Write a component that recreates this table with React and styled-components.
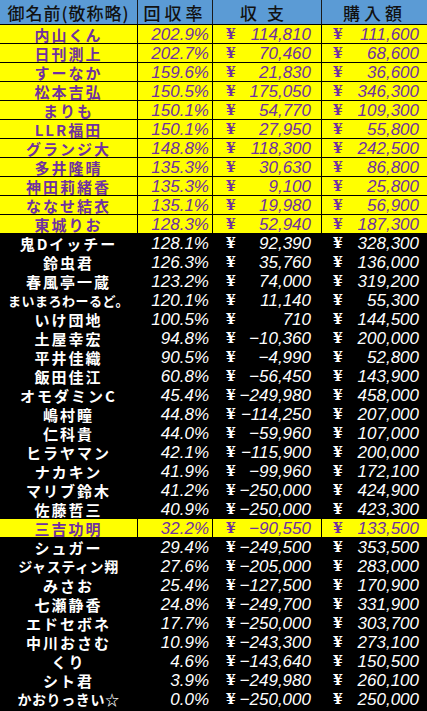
import React from "react";
import styled, { createGlobalStyle } from "styled-components";

const Global = createGlobalStyle`
  html, body { margin: 0; padding: 0; background: #000; }
  body { width: 427px; height: 711px; overflow: hidden; }
`;

const COLS = "138px 75px 109px 105px";

const Sheet = styled.div`
  width: 427px;
  height: 711px;
  background: #000;
  display: flex;
  flex-direction: column;
`;

const HeaderRow = styled.div`
  display: grid;
  grid-template-columns: ${COLS};
  height: 25px;
  box-sizing: border-box;
  background: #5b9bd5;
  border-bottom: 1px solid #000;
`;

const HeadCell = styled.div`
  display: flex;
  align-items: center;
  justify-content: center;
  box-sizing: border-box;
  border-right: 1px solid #1a1a1a;
  font-family: "Noto Sans CJK JP", sans-serif;
  font-weight: 500;
  font-size: 17px;
  line-height: 1;
  letter-spacing: ${(p) => p.$ls}px;
  color: #111;
  &:last-child { border-right: none; }
`;

const Row = styled.div`
  display: grid;
  grid-template-columns: ${COLS};
  height: 19px;
  box-sizing: border-box;
  background: ${(p) => (p.$hl ? "#ffff00" : "#000")};
  color: ${(p) => (p.$hl ? "#7030a0" : "#fff")};
  border-bottom: 1px solid #000;
`;

const Cell = styled.div`
  display: flex;
  align-items: center;
  box-sizing: border-box;
  border-right: 1px solid #000;
  overflow: hidden;
  white-space: nowrap;
  line-height: 1;
  &:last-child { border-right: none; }
`;

const NameCell = styled(Cell)`
  justify-content: center;
  font-family: "Noto Sans CJK JP", sans-serif;
  font-weight: 700;
  font-size: ${(p) => (p.$fit === 2 ? 13 : p.$fit === 1 ? 14 : 15)}px;
  letter-spacing: ${(p) => (p.$fit === 2 ? 0.5 : p.$fit === 1 ? 0.6 : 2)}px;
`;

const RateCell = styled(Cell)`
  justify-content: flex-end;
  padding-right: 3px;
  font-family: "Liberation Sans", Arial, sans-serif;
  font-style: italic;
  font-size: 17px;
`;

const MoneyCell = styled(Cell)`
  justify-content: space-between;
  padding-left: ${(p) => p.$pl}px;
  padding-right: ${(p) => p.$pr}px;
  font-family: "Liberation Sans", Arial, sans-serif;
  font-style: italic;
  font-size: 17px;
`;

const Yen = styled.span`
  font-family: "DejaVu Serif", "Liberation Serif", serif;
  font-style: normal;
  font-weight: 700;
  font-size: 14px;
`;

const rows = [
  ["内山くん", "202.9%", "114,810", "111,600", true],
  ["日刊測上", "202.7%", "70,460", "68,600", true],
  ["すーなか", "159.6%", "21,830", "36,600", true],
  ["松本吉弘", "150.5%", "175,050", "346,300", true],
  ["まりも", "150.1%", "54,770", "109,300", true],
  ["LLR福田", "150.1%", "27,950", "55,800", true],
  ["グランジ大", "148.8%", "118,300", "242,500", true],
  ["多井隆晴", "135.3%", "30,630", "86,800", true],
  ["神田莉緒香", "135.3%", "9,100", "25,800", true],
  ["ななせ結衣", "135.1%", "19,980", "56,900", true],
  ["東城りお", "128.3%", "52,940", "187,300", true],
  ["鬼Dイッチー", "128.1%", "92,390", "328,300"],
  ["鈴虫君", "126.3%", "35,760", "136,000"],
  ["春風亭一蔵", "123.2%", "74,000", "319,200"],
  ["まいまろわーるど。", "120.1%", "11,140", "55,300", false, 2],
  ["いけ団地", "100.5%", "710", "144,500"],
  ["土屋幸宏", "94.8%", "−10,360", "200,000"],
  ["平井佳織", "90.5%", "−4,990", "52,800"],
  ["飯田佳江", "60.8%", "−56,450", "143,900"],
  ["オモダミンC", "45.4%", "−249,980", "458,000"],
  ["嶋村瞳", "44.8%", "−114,250", "207,000"],
  ["仁科貴", "44.0%", "−59,960", "107,000"],
  ["ヒラヤマン", "42.1%", "−115,900", "200,000"],
  ["ナカキン", "41.9%", "−99,960", "172,100"],
  ["マリブ鈴木", "41.2%", "−250,000", "424,900"],
  ["佐藤哲三", "40.9%", "−250,000", "423,300"],
  ["三吉功明", "32.2%", "−90,550", "133,500", true],
  ["シュガー", "29.4%", "−249,500", "353,500"],
  ["ジャスティン翔", "27.6%", "−205,000", "283,000", false, 1],
  ["みさお", "25.4%", "−127,500", "170,900"],
  ["七瀬静香", "24.8%", "−249,700", "331,900"],
  ["エドセボネ", "17.7%", "−250,000", "303,700"],
  ["中川おさむ", "10.9%", "−243,300", "273,100"],
  ["くり", "4.6%", "−143,640", "150,500"],
  ["シト君", "3.9%", "−249,980", "260,100"],
  ["かおりっきい☆", "0.0%", "−250,000", "250,000", false, 1],
];

export default function App() {
  return (
    <Sheet>
      <Global />
      <HeaderRow>
        <HeadCell $ls={1}>御名前(敬称略)</HeadCell>
        <HeadCell $ls={4}>回収率</HeadCell>
        <HeadCell $ls={10}>収支</HeadCell>
        <HeadCell $ls={4}>購入額</HeadCell>
      </HeaderRow>
      {rows.map(([name, rate, bal, buy, hl, fit], i) => (
        <Row key={i} $hl={hl}>
          <NameCell $fit={fit || 0}>{name}</NameCell>
          <RateCell>{rate}</RateCell>
          <MoneyCell $pl={13} $pr={10}>
            <Yen>¥</Yen>
            <span>{bal}</span>
          </MoneyCell>
          <MoneyCell $pl={11} $pr={8}>
            <Yen>¥</Yen>
            <span>{buy}</span>
          </MoneyCell>
        </Row>
      ))}
    </Sheet>
  );
}
